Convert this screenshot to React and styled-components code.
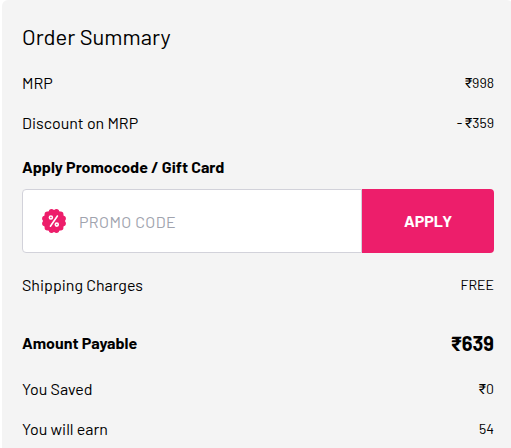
import React from 'react';
import styled, { createGlobalStyle } from 'styled-components';

const GlobalStyle = createGlobalStyle`
  * {
    box-sizing: border-box;
  }

  body {
    margin: 0;
    background: #fff;
    overflow: hidden;
    font-family: Barlow, Roboto, 'Noto Sans', sans-serif;
    color: #000;
  }
`;

const Panel = styled.section`
  height: 448px;
  margin: 0 -2px 0 2px;
  padding: 0 19px 0 20px;
  overflow: hidden;
  background: #f4f4f4;
  border-radius: 6px 6px 0 0;
`;

const Title = styled.h2`
  margin: 0;
  height: 62px;
  padding-top: 23px;
  font-size: 22px;
  font-weight: 400;
  line-height: 26px;
`;

const Row = styled.div`
  display: flex;
  align-items: center;
  justify-content: space-between;
  height: 40px;
  margin-top: ${props => props.$gap || 0}px;
`;

const Label = styled.span`
  font-size: 16px;
  font-weight: ${props => (props.$bold ? 700 : 400)};
  white-space: nowrap;
`;

const Value = styled.span`
  padding-top: ${props => (props.$bold ? 3 : 0)}px;
  font-size: ${props => (props.$bold ? 20 : 14)}px;
  font-weight: ${props => (props.$bold ? 700 : 400)};
  white-space: nowrap;
`;

const PromoHeading = styled.div`
  display: flex;
  align-items: center;
  height: 47px;
  padding-top: 2px;
`;

const PromoForm = styled.form`
  display: flex;
  height: 64px;
  margin: 0 0 11px;
`;

const PromoField = styled.label`
  display: flex;
  flex: 1;
  align-items: center;
  min-width: 0;
  padding-left: 18px;
  background: #fff;
  border: 1px solid #d2d2da;
  border-radius: 4px 0 0 4px;
`;

const PromoInput = styled.input`
  flex: 1;
  min-width: 0;
  margin-left: 12px;
  padding: 0;
  font-family: inherit;
  font-size: 16px;
  letter-spacing: .4px;
  background: none;
  border: 0;
  outline: none;

  &::placeholder {
    color: #a0a3ae;
    opacity: 1;
  }
`;

const ApplyButton = styled.button`
  width: 132px;
  padding: 0 0 1px;
  font-family: inherit;
  font-size: 16px;
  font-weight: 700;
  color: #fff;
  background: #ed1e6b;
  border: 0;
  border-radius: 0 4px 4px 0;
  cursor: pointer;
`;

const lobes = Array.from({ length: 12 }, (_, i) => ((i + 0.5) * Math.PI) / 6);

const PromoIcon = () => (
    <svg width='26' height='26' viewBox='0 0 26 26' fill='none'>
        <g fill='#ed1e6b'>
            <circle cx='13' cy='13' r='11'/>
            {lobes.map(a => (
                <circle key={a} cx={13 + 9.5 * Math.cos(a)} cy={13 + 9.5 * Math.sin(a)} r='2.7'/>
            ))}
        </g>
        <g stroke='#fff' strokeWidth='1.6' strokeLinecap='round'>
            <path d='M16.4 8l-7 10.2'/>
            <circle cx='9.9' cy='9.5' r='1.5'/>
            <circle cx='15.8' cy='16.6' r='1.5'/>
        </g>
    </svg>
);

const App = () => {
    return (
        <>
            <GlobalStyle/>
            <Panel>
                <Title>Order Summary</Title>
                <Row>
                    <Label>MRP</Label>
                    <Value>₹998</Value>
                </Row>
                <Row>
                    <Label>Discount on MRP</Label>
                    <Value>- ₹359</Value>
                </Row>
                <PromoHeading>
                    <Label $bold>Apply Promocode / Gift Card</Label>
                </PromoHeading>
                <PromoForm onSubmit={e => e.preventDefault()}>
                    <PromoField>
                        <PromoIcon/>
                        <PromoInput name='promo' type='text' placeholder='PROMO CODE'/>
                    </PromoField>
                    <ApplyButton type='submit'>APPLY</ApplyButton>
                </PromoForm>
                <Row>
                    <Label>Shipping Charges</Label>
                    <Value>FREE</Value>
                </Row>
                <Row $gap={18}>
                    <Label $bold>Amount Payable</Label>
                    <Value $bold>₹639</Value>
                </Row>
                <Row $gap={6}>
                    <Label>You Saved</Label>
                    <Value>₹0</Value>
                </Row>
                <Row>
                    <Label>You will earn</Label>
                    <Value>54</Value>
                </Row>
            </Panel>
        </>
    );
}

export default App;
